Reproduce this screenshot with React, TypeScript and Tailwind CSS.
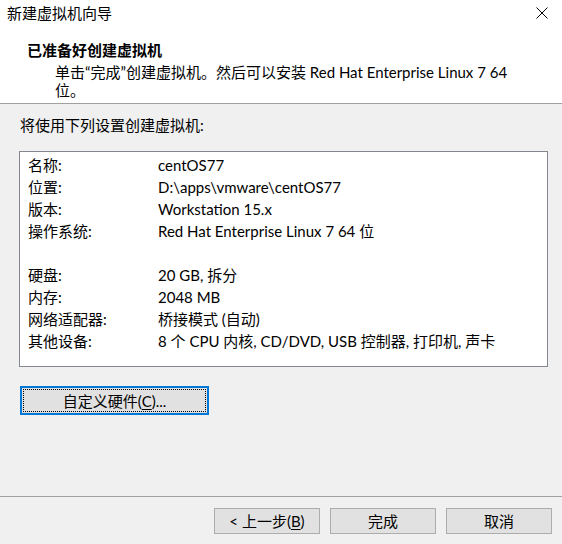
import React from "react";

const rows: [string, string][] = [
  ["名称:", "centOS77"],
  ["位置:", "D:\\apps\\vmware\\centOS77"],
  ["版本:", "Workstation 15.x"],
  ["操作系统:", "Red Hat Enterprise Linux 7 64 位"],
  ["", ""],
  ["硬盘:", "20 GB, 拆分"],
  ["内存:", "2048 MB"],
  ["网络适配器:", "桥接模式 (自动)"],
  ["其他设备:", "8 个 CPU 内核, CD/DVD, USB 控制器, 打印机, 声卡"],
];

const FooterButton = ({ children }: { children: React.ReactNode }) => (
  <button className="w-[106px] h-[26px] border border-[#adadad] bg-[#e1e1e1] text-[15px] leading-[24px] text-black">
    {children}
  </button>
);

const App = () => {
  return (
    <div
      className="w-[562px] h-[544px] bg-[#f0f0f0] flex flex-col text-black overflow-hidden"
      style={{ fontFamily: '"Lato", "Noto Sans CJK SC", sans-serif' }}
    >
      {/* header */}
      <div className="h-[104px] bg-white border-b border-[#a0a0a0] shrink-0">
        <div className="h-[27px] flex items-center justify-between pl-[7px] pr-[14px]">
          <span className="text-[15px] leading-[27px]">新建虚拟机向导</span>
          <svg width="12" height="12" viewBox="0 0 12 12" className="mb-[1px]">
            <path d="M0.5 0.5 L11.5 11.5 M11.5 0.5 L0.5 11.5" stroke="#000" strokeWidth="1" />
          </svg>
        </div>
        <div className="mt-[13px] pl-[27px] text-[15px] leading-[20px] font-bold">
          已准备好创建虚拟机
        </div>
        <div className="mt-[3px] pl-[55px] text-[15px] leading-[18px]">
          单击“完成”创建虚拟机。然后可以安装 Red Hat Enterprise Linux 7 64
          <br />
          位。
        </div>
      </div>

      {/* body */}
      <div className="flex-1 px-[19px] pt-[11px]">
        <div className="pl-[1px] text-[15px] leading-[20px]">将使用下列设置创建虚拟机:</div>
        <div className="mt-[16px] w-[529px] h-[216px] border border-[#828790] bg-white pt-[2px] pl-[8px]">
          {rows.map(([label, value], i) => (
            <div key={i} className="flex h-[22px] items-center text-[15px] leading-[22px]">
              <span className="w-[130px] shrink-0">{label}</span>
              <span>{value}</span>
            </div>
          ))}
        </div>
        <div className="mt-[19px] ml-[1px] w-[189px] h-[29px] border-2 border-[#0078d7] bg-[#e1e1e1] p-px">
          <div className="h-full border border-dotted border-black flex items-center justify-center text-[15px] leading-[20px]">
            自定义硬件(<span className="underline underline-offset-2">C</span>)...
          </div>
        </div>
      </div>

      {/* footer */}
      <div className="h-[48px] shrink-0 border-t border-[#a0a0a0] flex justify-end items-start gap-[10px] pt-[11px] pr-[10px]">
        <FooterButton>
          &lt; 上一步(<span className="underline underline-offset-2">B</span>)
        </FooterButton>
        <FooterButton>完成</FooterButton>
        <FooterButton>取消</FooterButton>
      </div>
    </div>
  );
};

export default App;
